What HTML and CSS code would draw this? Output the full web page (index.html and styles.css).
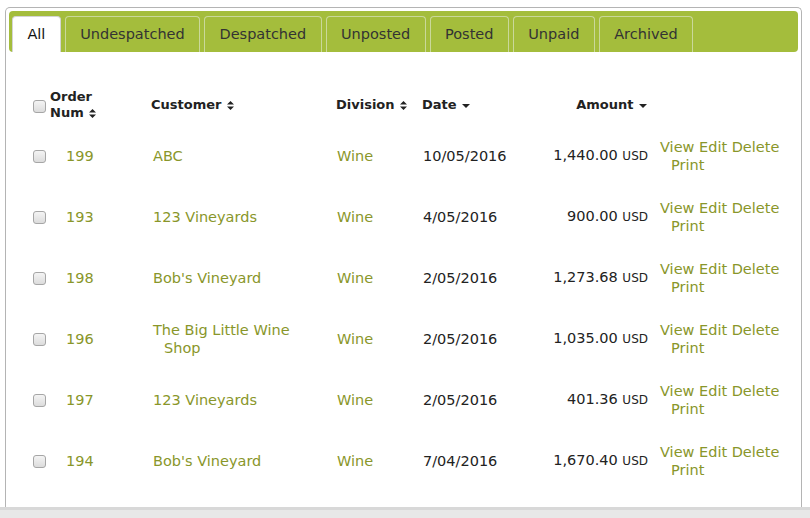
FILE: index.html
```html
<!DOCTYPE html>
<html>
<head>
<meta charset="utf-8">
<link rel="stylesheet" href="styles.css">
</head>
<body>
<div class="page">
  <div class="panel">
    <div class="tabbar">
      <div class="tab active">All</div>
      <div class="tab">Undespatched</div>
      <div class="tab">Despatched</div>
      <div class="tab">Unposted</div>
      <div class="tab">Posted</div>
      <div class="tab">Unpaid</div>
      <div class="tab">Archived</div>
    </div>
    <div class="table">
      <div class="row head">
        <div class="cell chk"><input type="checkbox" class="cb"></div>
        <div class="cell hnum">Order<br>Num <svg class="sort" width="7" height="9" viewBox="0 0 7 9"><path d="M3.5 0 L7 3.6 H0 Z M0 5.4 H7 L3.5 9 Z" fill="#222"/></svg></div>
        <div class="cell">Customer <svg class="sort" width="7" height="9" viewBox="0 0 7 9"><path d="M3.5 0 L7 3.6 H0 Z M0 5.4 H7 L3.5 9 Z" fill="#222"/></svg></div>
        <div class="cell">Division <svg class="sort" width="7" height="9" viewBox="0 0 7 9"><path d="M3.5 0 L7 3.6 H0 Z M0 5.4 H7 L3.5 9 Z" fill="#222"/></svg></div>
        <div class="cell">Date <svg class="caret" width="8" height="4" viewBox="0 0 8 4"><path d="M0 0 H8 L4 4 Z" fill="#222"/></svg></div>
        <div class="cell amt">Amount <svg class="caret" width="8" height="4" viewBox="0 0 8 4"><path d="M0 0 H8 L4 4 Z" fill="#222"/></svg></div>
        <div class="cell"></div>
      </div>

      <div class="row">
        <div class="cell chk"><input type="checkbox" class="cb"></div>
        <div class="cell num link">199</div>
        <div class="cell cust link">ABC</div>
        <div class="cell div link">Wine</div>
        <div class="cell date">10/05/2016</div>
        <div class="cell amt">1,440.00 <span class="cur">USD</span></div>
        <div class="cell acts link">View Edit Delete Print</div>
      </div>
      <div class="row">
        <div class="cell chk"><input type="checkbox" class="cb"></div>
        <div class="cell num link">193</div>
        <div class="cell cust link">123 Vineyards</div>
        <div class="cell div link">Wine</div>
        <div class="cell date">4/05/2016</div>
        <div class="cell amt">900.00 <span class="cur">USD</span></div>
        <div class="cell acts link">View Edit Delete Print</div>
      </div>
      <div class="row">
        <div class="cell chk"><input type="checkbox" class="cb"></div>
        <div class="cell num link">198</div>
        <div class="cell cust link">Bob's Vineyard</div>
        <div class="cell div link">Wine</div>
        <div class="cell date">2/05/2016</div>
        <div class="cell amt">1,273.68 <span class="cur">USD</span></div>
        <div class="cell acts link">View Edit Delete Print</div>
      </div>
      <div class="row">
        <div class="cell chk"><input type="checkbox" class="cb"></div>
        <div class="cell num link">196</div>
        <div class="cell cust link">The Big Little Wine Shop</div>
        <div class="cell div link">Wine</div>
        <div class="cell date">2/05/2016</div>
        <div class="cell amt">1,035.00 <span class="cur">USD</span></div>
        <div class="cell acts link">View Edit Delete Print</div>
      </div>
      <div class="row">
        <div class="cell chk"><input type="checkbox" class="cb"></div>
        <div class="cell num link">197</div>
        <div class="cell cust link">123 Vineyards</div>
        <div class="cell div link">Wine</div>
        <div class="cell date">2/05/2016</div>
        <div class="cell amt">401.36 <span class="cur">USD</span></div>
        <div class="cell acts link">View Edit Delete Print</div>
      </div>
      <div class="row">
        <div class="cell chk"><input type="checkbox" class="cb"></div>
        <div class="cell num link">194</div>
        <div class="cell cust link">Bob's Vineyard</div>
        <div class="cell div link">Wine</div>
        <div class="cell date">7/04/2016</div>
        <div class="cell amt">1,670.40 <span class="cur">USD</span></div>
        <div class="cell acts link">View Edit Delete Print</div>
      </div>
    </div>
  </div>
  <div class="strip"></div>
</div>
</body>
</html>
```

FILE: styles.css
```css
* { box-sizing: border-box; }
html, body { margin: 0; padding: 0; background: #fff; }
body {
  font-family: "DejaVu Sans", Verdana, sans-serif;
  color: #222;
}
.page {
  height: 518px;
  display: flex;
  flex-direction: column;
  overflow: hidden;
  padding-top: 7px;
}
.panel {
  flex: 1;
  margin-left: 5px;
  width: 797px;
  border: 1px solid #b4b4b4;
  border-bottom: none;
  border-radius: 5px 5px 0 0;
  padding: 3px 3px 0 3px;
}
.tabbar {
  height: 41px;
  background: #a4bd3c;
  border-radius: 4px;
  padding: 5px 3px 0 3px;
  display: flex;
  gap: 4px;
  align-items: flex-end;
}
.tab {
  height: 36px;
  padding: 0 14.4px;
  border: 1px solid #cad89a;
  border-bottom: none;
  border-radius: 4px 4px 0 0;
  font-size: 14.5px;
  line-height: 35px;
  color: #333;
  white-space: nowrap;
}
.tab.active {
  background: #fff;
  border-color: #d4d4d4;
  color: #111;
}
.table {
  margin-top: 33px;
  padding-left: 24px;
}
.row {
  display: grid;
  grid-template-columns: 17px 101px 185px 86px 100px 130px 145px;
  height: 61px;
  align-items: center;
  font-size: 14.5px;
  line-height: 18px;
}
.row.head {
  height: 40px;
  font-size: 13px;
  font-weight: bold;
  line-height: 16px;
  color: #222;
}
.row.head .chk { padding-top: 3px; }
.cell { white-space: normal; }
.cb {
  -webkit-appearance: none;
  appearance: none;
  display: block;
  margin: 0;
  width: 13px;
  height: 13px;
  border: 1px solid #a6a6a6;
  border-radius: 3px;
  background: linear-gradient(#f4f4f4, #dcdcdc);
}
.row .chk { padding-top: 2px; }
.link { color: #89962a; }
.num { padding-left: 16px; }
.cust { padding-left: 13px; text-indent: -11px; padding-right: 30px; }
.row:not(.head) .div { padding-left: 1px; }
.date { padding-left: 1px; color: #222; }
.amt { text-align: right; padding-right: 4px; color: #222; white-space: nowrap; }
.row.head .amt { padding-right: 5px; }
.cur { font-size: 12px; }
.acts { padding-left: 19px; text-indent: -11px; padding-right: 8px; }
.sort { vertical-align: -1px; margin-left: 1px; }
.caret { vertical-align: 1px; margin-left: 1px; }
.strip {
  height: 11px;
  flex: none;
  background: #e8e8e8;
  border-top: 3px solid #d8d8d8;
}
```
